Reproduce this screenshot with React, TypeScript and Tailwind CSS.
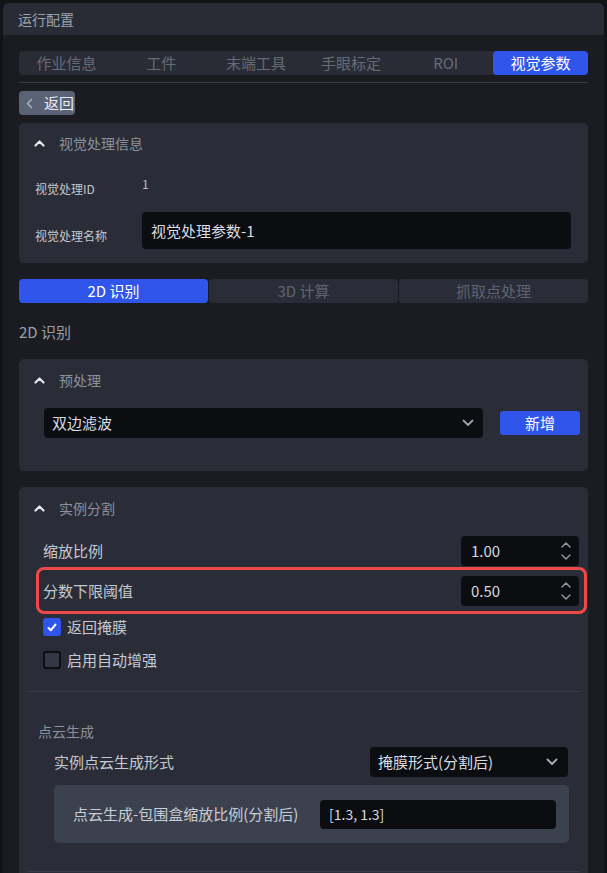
import React from "react";

const ChevUp = () => (
  <svg width="11" height="7" viewBox="0 0 11 7" fill="none">
    <polyline points="1.5,5.5 5.5,1.5 9.5,5.5" stroke="#e6e8ec" strokeWidth="2.2" strokeLinecap="round" strokeLinejoin="round" />
  </svg>
);

const ChevDown = ({ color = "#9aa0ab" }: { color?: string }) => (
  <svg width="12" height="8" viewBox="0 0 12 8" fill="none">
    <polyline points="1.5,1.5 6,6 10.5,1.5" stroke={color} strokeWidth="1.8" strokeLinecap="round" strokeLinejoin="round" />
  </svg>
);

const Spinner = () => (
  <div className="flex flex-col items-center gap-[6px]">
    <svg width="10" height="6" viewBox="0 0 10 6" fill="none">
      <polyline points="1,5 5,1 9,5" stroke="#8f95a1" strokeWidth="1.5" strokeLinecap="round" strokeLinejoin="round" />
    </svg>
    <svg width="10" height="6" viewBox="0 0 10 6" fill="none">
      <polyline points="1,1 5,5 9,1" stroke="#8f95a1" strokeWidth="1.5" strokeLinecap="round" strokeLinejoin="round" />
    </svg>
  </div>
);

const CardHeader = ({ title, h }: { title: string; h: string }) => (
  <div className={`flex items-center pl-[15px] ${h}`}>
    <div className="w-[25px] flex items-center">
      <ChevUp />
    </div>
    <span className="text-[14px] leading-[20px] text-[#8c919c]">{title}</span>
  </div>
);

const NumInput = ({ value }: { value: string }) => (
  <div className="w-[118px] h-[30px] bg-[#0c0d11] rounded-[4px] flex items-center justify-between pl-[10px] pr-[8px]">
    <span className="text-[15px] leading-[20px] text-[#d4d8df]">{value}</span>
    <Spinner />
  </div>
);

export default function App() {
  const tabs = ["作业信息", "工件", "末端工具", "手眼标定", "ROI", "视觉参数"];
  return (
    <div
      className="w-full h-[873px] overflow-hidden bg-[#131418] pt-[3px] px-[3px]"
      style={{ fontFamily: '"Noto Sans CJK SC", "Noto Sans", sans-serif' }}
    >
      <div className="h-full bg-[#1b1c21] rounded-t-[6px]">
        <div className="h-[32px] bg-[#2a2c35] rounded-t-[6px] flex items-center pl-[15px]">
          <span className="text-[14px] leading-[20px] text-[#9da3af]">运行配置</span>
        </div>
        <div className="px-[16px] pt-[16px]">
          {/* top tabs */}
          <div className="h-[24px] bg-[#2a2c35] rounded-[4px] flex">
            {tabs.map((t, i) =>
              i === 5 ? (
                <div key={t} className="flex-1 rounded-[4px] bg-[#2f55ea] flex items-center justify-center text-[15px] leading-[20px] text-white">
                  {t}
                </div>
              ) : (
                <div key={t} className="flex-1 flex items-center justify-center text-[15px] leading-[20px] text-[#666b78]">
                  {t}
                </div>
              )
            )}
          </div>
          <div className="mt-[7px] h-px bg-[#393b47]" />
          {/* back */}
          <div className="mt-[8px] h-[24px] w-[56px] rounded-[4px] bg-[#5a6275] flex items-center pl-[7px] gap-[11px]">
            <svg width="7" height="11" viewBox="0 0 7 11" fill="none">
              <polyline points="5.5,1.5 1.5,5.5 5.5,9.5" stroke="#a9afbd" strokeWidth="1.6" strokeLinecap="round" strokeLinejoin="round" />
            </svg>
            <span className="text-[15px] leading-[20px] text-[#e9ebef]">返回</span>
          </div>
          {/* card 1 */}
          <div className="mt-[8px] bg-[#2a2d37] rounded-[5px] pb-[14px]">
            <CardHeader title="视觉处理信息" h="h-[40px]" />
            <div className="mt-[13px] flex">
              <div className="w-[123px] pl-[16px] pt-[5px] text-[12px] leading-[16px] text-[#c3c8d0]">视觉处理ID</div>
              <div className="text-[12px] leading-[16px] text-[#b9bec8]">1</div>
            </div>
            <div className="mt-[15px] flex items-end pr-[17px]">
              <div className="w-[123px] shrink-0 pl-[16px] pb-[5px] text-[12px] leading-[16px] text-[#c3c8d0]">视觉处理名称</div>
              <div className="flex-1 h-[37px] bg-[#0c0d11] rounded-[4px] flex items-center pl-[9px] text-[15px] leading-[20px] text-[#d8dce3]">
                视觉处理参数-1
              </div>
            </div>
          </div>
          {/* sub tabs */}
          <div className="mt-[16px] h-[24px] flex gap-px">
            <div className="flex-1 rounded-[4px] bg-[#2f55ea] flex items-center justify-center text-[15px] leading-[20px] text-white">2D 识别</div>
            <div className="flex-1 rounded-[4px] bg-[#2a2d37] flex items-center justify-center text-[15px] leading-[20px] text-[#5e6370]">3D 计算</div>
            <div className="flex-1 rounded-[4px] bg-[#2a2d37] flex items-center justify-center text-[15px] leading-[20px] text-[#5e6370]">抓取点处理</div>
          </div>
          <div className="mt-[19px] text-[15px] leading-[20px] text-[#9aa0ab]">2D 识别</div>
          {/* card 2 */}
          <div className="mt-[17px] bg-[#2a2d37] rounded-[5px] pb-[33px]">
            <CardHeader title="预处理" h="h-[42px]" />
            <div className="mt-[7px] flex items-center pl-[25px] pr-[8px] gap-[17px]">
              <div className="flex-1 h-[30px] bg-[#0c0d11] rounded-[4px] flex items-center justify-between pl-[8px] pr-[9px]">
                <span className="text-[15px] leading-[20px] text-[#d8dce3]">双边滤波</span>
                <ChevDown />
              </div>
              <div className="w-[80px] h-[24px] rounded-[3px] bg-[#2f55ea] flex items-center justify-center text-[15px] leading-[20px] text-white">新增</div>
            </div>
          </div>
          {/* card 3 */}
          <div className="mt-[16px] bg-[#2a2d37] rounded-t-[5px] pb-[40px]">
            <CardHeader title="实例分割" h="h-[42px]" />
            <div className="mt-[7px] flex items-center justify-between pl-[24px] pr-[9px]">
              <span className="text-[15px] leading-[20px] text-[#c5cad3]">缩放比例</span>
              <NumInput value="1.00" />
            </div>
            <div className="mt-[10px] relative flex items-center justify-between pl-[24px] pr-[9px]">
              <span className="text-[15px] leading-[20px] text-[#c5cad3]">分数下限阈值</span>
              <NumInput value="0.50" />
              <div className="absolute left-[17px] right-[1px] top-[-9px] bottom-[-8px] border-[3px] border-[#ef4848] rounded-[8px] pointer-events-none" />
            </div>
            <div className="mt-[11px] flex items-center pl-[24px] gap-[6px]">
              <div className="w-[18px] h-[18px] rounded-[3px] bg-[#2f55ea] flex items-center justify-center">
                <svg width="10" height="9" viewBox="0 0 10 9" fill="none">
                  <polyline points="1.5,5 3.8,7.3 8.5,1.5" stroke="white" strokeWidth="2" strokeLinecap="round" strokeLinejoin="round" />
                </svg>
              </div>
              <span className="text-[15px] leading-[20px] text-[#c5cad3]">返回掩膜</span>
            </div>
            <div className="mt-[13px] flex items-center pl-[24px] gap-[6px]">
              <div className="w-[18px] h-[18px] rounded-[3px] bg-[#343745] border-[2px] border-[#0e0f13]" />
              <span className="text-[15px] leading-[20px] text-[#c5cad3]">启用自动增强</span>
            </div>
            <div className="mt-[21px] mx-[8px] h-px bg-[#3c3f4b]" />
            <div className="mt-[29px] pl-[19px] text-[14px] leading-[20px] text-[#8c919c]">点云生成</div>
            <div className="mt-[6px] flex items-center justify-between pl-[35px] pr-[20px]">
              <span className="text-[15px] leading-[20px] text-[#c5cad3]">实例点云生成形式</span>
              <div className="w-[198px] h-[30px] bg-[#0c0d11] rounded-[4px] flex items-center justify-between pl-[8px] pr-[10px]">
                <span className="text-[15px] leading-[20px] text-[#d8dce3]">掩膜形式(分割后)</span>
                <ChevDown color="#a9afba" />
              </div>
            </div>
            <div className="mt-[8px] ml-[35px] mr-[19px] h-[58px] bg-[#3c4150] rounded-[5px] flex items-center pl-[19px] pr-[13px]">
              <span className="text-[15px] leading-[20px] text-[#c9ced6] w-[247px] shrink-0">点云生成-包围盒缩放比例(分割后)</span>
              <div className="flex-1 h-[29px] bg-[#0c0d11] rounded-[4px] flex items-center pl-[9px] text-[14px] leading-[20px] text-[#d8dce3]">
                [1.3, 1.3]
              </div>
            </div>
            <div className="mt-[28px] mx-[8px] h-px bg-[#3c3f4b]" />
          </div>
        </div>
      </div>
    </div>
  );
}
